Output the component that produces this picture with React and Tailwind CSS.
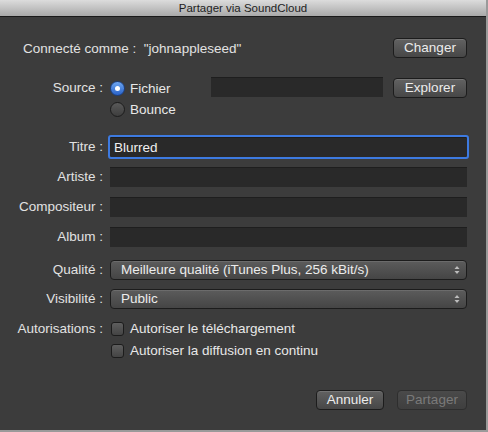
import React from "react";

const font = { fontFamily: '"Liberation Sans", Arial, sans-serif' };

function Btn({ children, disabled, className = "" }) {
  return (
    <div
      className={`h-[20px] flex items-center justify-center rounded-[4px] border text-[13.5px] leading-[16px] ${
        disabled
          ? "border-[#2e2e2e] bg-gradient-to-b from-[#4a4a4a] to-[#3f3f3f] text-[#7a7a7a]"
          : "border-[#1c1c1c] bg-gradient-to-b from-[#626262] to-[#474747] text-[#ececec] shadow-[inset_0_1px_0_rgba(255,255,255,0.12)]"
      } ${className}`}
    >
      {children}
    </div>
  );
}

function Label({ children }) {
  return <div className="w-[104px] shrink-0 text-right pr-[1px] text-[13.5px] leading-[16px] text-[#e2e2e2]">{children}</div>;
}

function Field({ children, focus }) {
  return (
    <div
      className={`flex-1 h-[20px] bg-[#292929] border-t border-[#1e1e1e] flex items-center px-[4px] text-[13.5px] leading-[16px] text-[#f0f0f0] ${
        focus ? "outline outline-[2.5px] outline-[#3d7ae0] rounded-[1px]" : ""
      }`}
    >
      {children}
    </div>
  );
}

function Popup({ children }) {
  return (
    <div className="flex-1 h-[20px] rounded-[4px] border border-[#1c1c1c] bg-gradient-to-b from-[#5c5c5c] to-[#454545] shadow-[inset_0_1px_0_rgba(255,255,255,0.1)] flex items-center pl-[10px] pr-[6px] text-[13.5px] leading-[16px] text-[#ececec]">
      <span className="flex-1">{children}</span>
      <svg width="6" height="10" viewBox="0 0 6 10">
        <path d="M3 1 L5.5 4 L0.5 4 Z" fill="#bdbdbd" />
        <path d="M3 9 L5.5 6 L0.5 6 Z" fill="#bdbdbd" />
      </svg>
    </div>
  );
}

function Radio({ on }) {
  return on ? (
    <div className="w-[15px] h-[15px] shrink-0 rounded-full border border-[#1a3f80] bg-gradient-to-b from-[#6ea6f0] to-[#2a62c8] flex items-center justify-center">
      <div className="w-[5px] h-[5px] rounded-full bg-white" />
    </div>
  ) : (
    <div className="w-[15px] h-[15px] shrink-0 rounded-full border border-[#1c1c1c] bg-gradient-to-b from-[#5a5a5a] to-[#3e3e3e]" />
  );
}

function Check() {
  return <div className="w-[13px] h-[14px] shrink-0 rounded-[3px] border border-[#1c1c1c] bg-gradient-to-b from-[#5e5e5e] to-[#444444]" />;
}

export default function App() {
  return (
    <div style={font} className="w-[488px] h-[432px] flex flex-col bg-[#3c3c3c] border-r-2 border-b-2 border-[#9a9a9a] overflow-hidden">
      <div className="h-[16px] shrink-0 bg-gradient-to-b from-[#dcdcdc] to-[#a9a9a9] flex items-center justify-center text-[11.5px] leading-[14px] text-[#1e1e1e]">
        Partager via SoundCloud
      </div>
      <div className="h-[1px] shrink-0 bg-[#1a1a1a]" />
      <div className="flex flex-col pr-[19px]">
        <div className="flex items-center mt-[21px] pl-[23px] h-[20px]">
          <div className="flex-1 text-[13.5px] leading-[16px] text-[#e2e2e2] pt-[2px]">
            Connecté comme :&nbsp; "johnappleseed"
          </div>
          <Btn className="w-[74px]">Changer</Btn>
        </div>

        <div className="flex mt-[19px] h-[38px]">
          <Label>
            <div className="h-[14px] mt-[4px] flex items-center justify-end">Source :</div>
          </Label>
          <div className="flex flex-col ml-[6px] w-[101px] pt-[4px] gap-[6px]">
            <div className="flex items-center gap-[5px] h-[15px] text-[13.5px] leading-[16px] text-[#e8e8e8]">
              <Radio on />
              Fichier
            </div>
            <div className="flex items-center gap-[5px] h-[15px] text-[13.5px] leading-[16px] text-[#e8e8e8]">
              <Radio />
              Bounce
            </div>
          </div>
          <div className="w-[172px] h-[20px] bg-[#292929] border-t border-[#1e1e1e]" />
          <Btn className="w-[74px] ml-[10px] mt-[1px]">Explorer</Btn>
        </div>

        <div className="flex flex-col gap-[10px] mt-[22px]">
          <div className="flex items-center gap-[6px] h-[20px]">
            <Label>Titre :</Label>
            <Field focus>Blurred</Field>
          </div>
          <div className="flex items-center gap-[6px] h-[20px]">
            <Label>Artiste :</Label>
            <Field />
          </div>
          <div className="flex items-center gap-[6px] h-[20px]">
            <Label>Compositeur :</Label>
            <Field />
          </div>
          <div className="flex items-center gap-[6px] h-[20px]">
            <Label>Album :</Label>
            <Field />
          </div>
        </div>

        <div className="flex flex-col gap-[9px] mt-[13px]">
          <div className="flex items-center gap-[6px] h-[20px]">
            <Label>Qualité :</Label>
            <Popup>Meilleure qualité (iTunes Plus, 256 kBit/s)</Popup>
          </div>
          <div className="flex items-center gap-[6px] h-[20px]">
            <Label>Visibilité :</Label>
            <Popup>Public</Popup>
          </div>
        </div>

        <div className="flex mt-[13px]">
          <Label>
            <div className="h-[14px] flex items-center justify-end">Autorisations :</div>
          </Label>
          <div className="flex flex-col gap-[8px] ml-[7px]">
            <div className="flex items-center gap-[6px] text-[13.5px] leading-[16px] text-[#e8e8e8] h-[14px]">
              <Check />
              Autoriser le téléchargement
            </div>
            <div className="flex items-center gap-[6px] text-[13.5px] leading-[16px] text-[#e8e8e8] h-[14px]">
              <Check />
              Autoriser la diffusion en continu
            </div>
          </div>
        </div>

        <div className="flex justify-end mt-[32px] gap-[13px]">
          <Btn className="w-[68px]">Annuler</Btn>
          <Btn disabled className="w-[70px]">Partager</Btn>
        </div>
      </div>
    </div>
  );
}
